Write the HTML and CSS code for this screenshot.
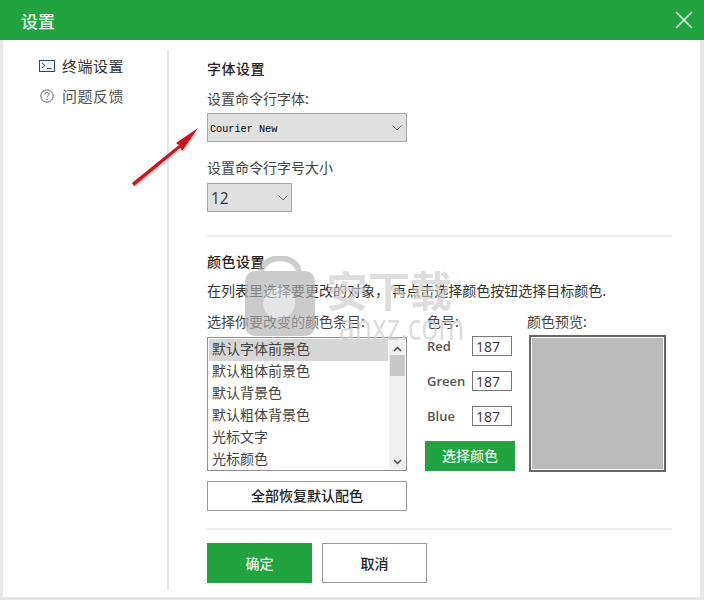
FILE: index.html
```html
<!DOCTYPE html>
<html lang="zh-CN">

<head>
    <meta charset="UTF-8" />
    <title>设置</title>
    <link rel="stylesheet" href="styles.css">
</head>

<body>
    <div class="window">
        <div class="title-bar">
            <span class="title">设置</span>
            <svg class="close" width="18" height="18" viewBox="0 0 18 18">
                <path d="M1 1L17 17M17 1L1 17" stroke="#e4f5e8" stroke-width="1.6" fill="none" />
            </svg>
        </div>

        <div class="body">
            <div class="sidebar">
                <div class="nav-item nav-active">
                    <svg width="16" height="12" viewBox="0 0 16 12">
                        <rect x="0.5" y="0.5" width="15" height="11" fill="#eef3f7" stroke="#34495e" />
                        <path d="M3 3L6 5.5L3 8M8 8.5H12.5" stroke="#34495e" fill="none" />
                    </svg>
                    <span>终端设置</span>
                </div>
                <div class="nav-item">
                    <svg width="14" height="14" viewBox="0 0 14 14">
                        <circle cx="7" cy="7" r="6.2" fill="none" stroke="#666" />
                        <path d="M5 5.4C5 2.9 9 2.9 9 5.2C9 6.6 7 6.6 7 8.3" stroke="#666" fill="none" />
                        <circle cx="7" cy="10.3" r="0.8" fill="#666" />
                    </svg>
                    <span>问题反馈</span>
                </div>
            </div>

            <div class="content">
                <section class="font-section">
                    <h2>字体设置</h2>
                    <div class="label">设置命令行字体:</div>
                    <div class="select select-font">
                        <span class="mono">Courier New</span>
                        <svg class="chev" width="10" height="6" viewBox="0 0 10 6"><path d="M0.5 0.5L5 5L9.5 0.5" stroke="#666" fill="none" /></svg>
                    </div>
                    <div class="label label-size">设置命令行字号大小</div>
                    <div class="select select-size">
                        <span>12</span>
                        <svg class="chev" width="10" height="6" viewBox="0 0 10 6"><path d="M0.5 0.5L5 5L9.5 0.5" stroke="#666" fill="none" /></svg>
                    </div>
                </section>

                <section class="color-section">
                    <h2>颜色设置</h2>
                    <div class="hint">在列表里选择要更改的对象， 再点击选择颜色按钮选择目标颜色.</div>
                    <div class="color-grid">
                        <div class="col-list">
                            <div class="label">选择你要改变的颜色条目:</div>
                            <div class="listbox">
                                <div class="rows">
                                    <div class="row row-selected">默认字体前景色</div>
                                    <div class="row">默认粗体前景色</div>
                                    <div class="row">默认背景色</div>
                                    <div class="row">默认粗体背景色</div>
                                    <div class="row">光标文字</div>
                                    <div class="row">光标颜色</div>
                                </div>
                                <div class="scrollbar">
                                    <svg width="9" height="6" viewBox="0 0 9 6"><path d="M1 5L4.5 1.5L8 5" stroke="#444" stroke-width="1.5" fill="none" /></svg>
                                    <div class="thumb"></div>
                                    <svg class="down" width="9" height="6" viewBox="0 0 9 6"><path d="M1 1L4.5 4.5L8 1" stroke="#444" stroke-width="1.5" fill="none" /></svg>
                                </div>
                            </div>
                            <button class="btn btn-reset">全部恢复默认配色</button>
                        </div>

                        <div class="col-rgb">
                            <div class="label">色号:</div>
                            <div class="rgb-row"><span>Red</span><div class="num">187</div></div>
                            <div class="rgb-row"><span>Green</span><div class="num">187</div></div>
                            <div class="rgb-row"><span>Blue</span><div class="num">187</div></div>
                            <button class="btn btn-green btn-pick">选择颜色</button>
                        </div>

                        <div class="col-preview">
                            <div class="label">颜色预览:</div>
                            <div class="preview"></div>
                        </div>
                    </div>
                </section>

                <div class="actions">
                    <button class="btn btn-green btn-action">确定</button>
                    <button class="btn btn-action btn-cancel">取消</button>
                </div>
            </div>
        </div>
    </div>

    <!-- annotation arrow -->
    <svg class="arrow" width="80" height="70" viewBox="0 0 80 70">
        <path d="M2 56L49 18L46 16L68 1L52 24L50.500 20.500L4 59Z" fill="#c9161d" />
    </svg>

    <!-- watermark -->
    <div class="watermark">
        <svg width="72" height="82" viewBox="0 0 72 82">
            <path d="M17 18C17 -3 55 -3 55 18" fill="none" stroke="#b5b5b5" stroke-width="6" />
            <rect x="1" y="15" width="70" height="65" rx="10" fill="#b0b0b0" />
            <circle cx="35" cy="47" r="16" fill="#d8d8d8" />
        </svg>
        <div class="wm-text">
            <div class="wm-cn">安下载</div>
            <div class="wm-en">anxz.com</div>
        </div>
    </div>
</body>

</html>
```

FILE: styles.css
```css
* {
    box-sizing: border-box
}

html,
body {
    margin: 0;
    height: 600px;
    overflow: hidden;
    background: #fff;
}

body {
    position: relative;
    font-family: "Noto Sans CJK SC", "Noto Sans", sans-serif;
    font-size: 14px;
    color: #444;
}

.window {
    width: 704px;
    height: 600px;
    border: solid #e6e6e6;
    border-width: 0 4px 3px 3px;
}

.title-bar {
    height: 40px;
    margin: 0 -4px 0 -3px;
    background: #21a33f;
    display: flex;
    align-items: center;
    justify-content: space-between;
    padding: 0 11px 0 21px;
}

.title {
    font-size: 17px;
    font-weight: 500;
    color: #e8f7ec;
}

.close {
    display: block;
}

.body {
    display: flex;
    height: 557px;
}

.sidebar {
    width: 166px;
    margin-top: 10px;
    margin-bottom: 7px;
    border-right: 2px solid #e6e6e6;
    padding: 1px 0 0 36px;
}

.nav-item {
    display: flex;
    align-items: center;
    gap: 7px;
    height: 30px;
    font-size: 15px;
    letter-spacing: .5px;
    color: #555;
}

.nav-item span {
    padding-bottom: 2px;
}

.nav-item svg {
    width: 16px;
}

.nav-active {
    color: #333;
}

.content {
    width: 466px;
    margin-left: 37px;
}

h2 {
    margin: 0;
    font-size: 14px;
    font-weight: 500;
    letter-spacing: .5px;
    line-height: 18px;
    color: #222;
}

.font-section {
    height: 197px;
    padding-top: 19px;
    border-bottom: 2px solid #ececec;
}

.label {
    font-size: 14px;
    line-height: 20px;
    color: #444;
}

.font-section h2 {
    margin-left: 1px;
}

.font-section .label {
    margin-top: 11px;
    margin-left: 1px;
}

.font-section .label-size {
    margin-top: 15px;
}

.select {
    display: flex;
    align-items: center;
    justify-content: space-between;
    margin: 5px 0 0 1px;
    height: 29px;
    background: #e0e0e0;
    border: 1px solid #a6a6a6;
    color: #333;
}

.select-font {
    width: 200px;
    padding: 0 3px 0 2px;
}

.select-size {
    width: 85px;
    padding: 0 2px 0 3px;
    margin-top: 6px;
    font-family: "Open Sans", sans-serif;
    font-size: 15.500px;
}

.mono {
    font-family: "Liberation Mono", monospace;
    font-size: 10.200px;
    padding-top: 3px;
    color: #000;
}

.chev {
    margin-right: 1px;
}

.color-section {
    height: 293px;
    padding: 15px 0 0 1px;
    border-bottom: 2px solid #ececec;
}

.hint {
    margin-top: 10px;
    line-height: 20px;
    color: #333;
}

.color-grid {
    display: grid;
    grid-template-columns: 200px 100px 145px;
    column-gap: 10px;
    margin-top: 11px;
}

.listbox {
    display: flex;
    width: 200px;
    height: 134px;
    margin-top: 6px;
    border: 1px solid #8f8f8f;
    padding: 1px;
}

.rows {
    width: 179px;
    overflow: hidden;
}

.row {
    height: 22px;
    line-height: 19px;
    padding-left: 3px;
    color: #444;
}

.row-selected {
    background: #d6d6d6;
}

.scrollbar {
    width: 16px;
    margin-left: 1px;
    background: #efefef;
    display: flex;
    flex-direction: column;
    align-items: center;
    padding: 7px 0 4px;
}

.thumb {
    width: 15px;
    height: 21px;
    margin-top: 3px;
    background: #c8c8c8;
}

.down {
    margin-top: auto;
}

.btn {
    display: block;
    padding: 0 0 3px;
    font-family: inherit;
    font-size: 14px;
    font-weight: 500;
    background: #fff;
    border: 1px solid #979797;
    color: #222;
}

.btn-reset {
    width: 200px;
    height: 30px;
    margin-top: 10px;
}

.btn-green {
    background: #21a33f;
    border-color: #21a33f;
    color: #e8f7ec;
}

.col-rgb {
    padding-left: 10px;
}

.rgb-row {
    display: flex;
    justify-content: space-between;
    align-items: center;
    width: 85px;
    height: 20px;
    margin-bottom: 15px;
    font-family: "Open Sans", sans-serif;
    font-size: 13px;
    font-weight: 600;
    color: #555;
}

.label + .rgb-row {
    margin-top: 5px;
}

.num {
    width: 40px;
    height: 20px;
    border: 1px solid #777;
    padding-left: 3px;
    line-height: 19px;
    font-weight: 400;
    font-size: 14px;
    color: #333;
}

.btn-pick {
    width: 90px;
    height: 30px;
    margin: 0 0 0 -2px;
}

.preview {
    width: 137px;
    height: 137px;
    margin: 4px 0 0 2px;
    background: #bbb;
    border: 2px solid #666;
    box-shadow: inset 0 0 0 1px #fff;
}

.actions {
    display: flex;
    gap: 10px;
    padding: 13px 0 0 1px;
}

.btn-action {
    width: 105px;
    height: 40px;
    padding: 0;
    font-size: 14px;
}

.arrow {
    position: absolute;
    left: 130px;
    top: 127px;
    filter: drop-shadow(1px 1px 1px rgba(0, 0, 0, .3));
}

.watermark {
    position: absolute;
    left: 244px;
    top: 256px;
    display: flex;
    gap: 10px;
    opacity: .65;
    pointer-events: none;
}

.wm-text {
    color: #ccc;
    font-family: "Noto Sans", sans-serif;
}

.wm-cn {
    font-size: 42px;
    font-weight: 700;
    line-height: 50px;
    font-family: "Noto Sans CJK SC", sans-serif;
    margin-top: 8px;
}

.wm-en {
    font-size: 36px;
    line-height: 26px;
    margin-left: 13px;
    transform: scaleX(.78);
    transform-origin: left;
}
```
